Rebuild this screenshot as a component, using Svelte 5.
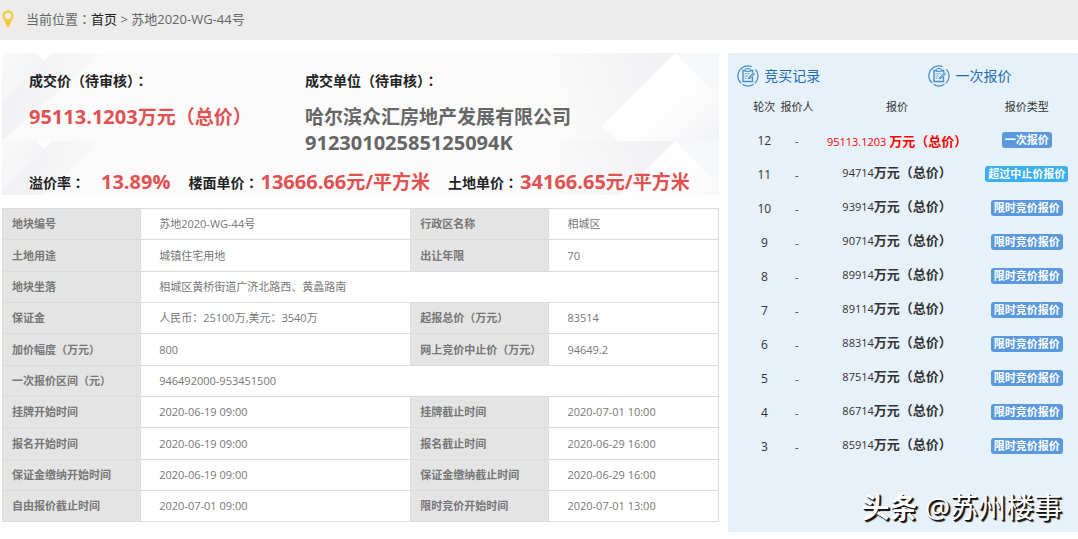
<script>
  const parcel = [
    ['地块编号', '苏地2020-WG-44号', '行政区名称', '相城区'],
    ['土地用途', '城镇住宅用地', '出让年限', '70'],
    ['地块坐落', '相城区黄桥街道广济北路西、黄蠡路南'],
    ['保证金', '人民币：25100万,美元：3540万', '起报总价（万元）', '83514'],
    ['加价幅度（万元）', '800', '网上竞价中止价（万元）', '94649.2'],
    ['一次报价区间（元）', '946492000-953451500'],
    ['挂牌开始时间', '2020-06-19 09:00', '挂牌截止时间', '2020-07-01 10:00'],
    ['报名开始时间', '2020-06-19 09:00', '报名截止时间', '2020-06-29 16:00'],
    ['保证金缴纳开始时间', '2020-06-19 09:00', '保证金缴纳截止时间', '2020-06-29 16:00'],
    ['自由报价截止时间', '2020-07-01 09:00', '限时竞价开始时间', '2020-07-01 13:00'],
  ]

  const timed = '限时竞价报价'

  const bids = [
    { round: 12, price: '95113.1203 ', type: '一次报价', final: true },
    { round: 11, price: '94714', type: '超过中止价报价', over: true },
    { round: 10, price: '93914', type: timed },
    { round: 9, price: '90714', type: timed },
    { round: 8, price: '89914', type: timed },
    { round: 7, price: '89114', type: timed },
    { round: 6, price: '88314', type: timed },
    { round: 5, price: '87514', type: timed },
    { round: 4, price: '86714', type: timed },
    { round: 3, price: '85914', type: timed },
  ]
</script>

{#snippet recordIcon()}
  <svg viewBox="0 0 22 22" width="22" height="22" fill="none" stroke="#4a8fca" aria-hidden="true">
    <path d="M14.500 1.600A10 10 0 0 0 4 18.200M5.500 19.300A10 10 0 0 0 16.500 19.300M18 18.200A10 10 0 0 0 18.500 4.400" stroke-width="1.300" />
    <path d="M15.500 12V16.500H6V5.500H15.500V7.500" stroke-width="1.400" />
    <path d="M8 6.300V4.500L9.500 3.500H12L13.500 4.500V6.300Z" fill="#cfe3f4" />
    <path d="M7.500 8.700H13M7.500 10.900H11M7.500 13.100H10.200" stroke="#7fb1dc" />
    <path d="M11.500 13.800L12 12L16.300 7.800L17.600 9.100L13.300 13.300Z" fill="#8fbce2" />
  </svg>
{/snippet}

<nav class="crumbs" aria-label="当前位置">
  <svg width="12" height="18" viewBox="0 0 12 18" aria-hidden="true">
    <path fill="#f7c93e" fill-rule="evenodd" d="M6 0.500C2.800 0.500 0.500 2.900 0.500 5.900C0.500 9 3.600 11.200 4.800 17.200H7.200C8.400 11.200 11.500 9 11.500 5.900C11.500 2.900 9.200 0.500 6 0.500ZM6 2.700A3.300 3.300 0 1 1 6 9.300A3.300 3.300 0 1 1 6 2.700Z" />
  </svg>
  <span>当前位置<span class="colon">：</span><a href="#home">首页</a> &gt; 苏地2020-WG-44号</span>
</nav>

<main class="layout">
  <div class="lot">
    <section class="deal">
      <!-- faceted paper backdrop, the tile repeats every 88px -->
      <svg class="facets" viewBox="0 0 717 142" preserveAspectRatio="none" aria-hidden="true">
        <defs>
          <linearGradient id="fold" x1="0" y1="0.3" x2="1" y2="0.6">
            <stop offset="0" stop-color="#eff0f2" />
            <stop offset="1" stop-color="#fbfbfb" />
          </linearGradient>
          <linearGradient id="corner" x1="0" y1="0" x2="1" y2="0.8">
            <stop offset="0" stop-color="#f9f9fa" />
            <stop offset="1" stop-color="#f2f3f4" />
          </linearGradient>
          <linearGradient id="shade" x1="0" y1="0.5" x2="1" y2="0.3">
            <stop offset="0" stop-color="#fbfbfb" />
            <stop offset="1" stop-color="#f0f1f3" />
          </linearGradient>
          <linearGradient id="peak" x1="0.3" y1="0.3" x2="1" y2="0.9">
            <stop offset="0" stop-color="#ffffff" />
            <stop offset="0.5" stop-color="#fdfdfd" />
            <stop offset="1" stop-color="#f3f4f6" />
          </linearGradient>
          <pattern id="tile" width="717" height="88" patternUnits="userSpaceOnUse">
            <rect width="717" height="88" fill="#fbfbfb" />
            <path d="M48 0H100L0 88V50Z" fill="url(#fold)" />
            <path d="M0 0H34L42 8L0 50Z" fill="url(#corner)" />
            <path d="M34 0H50L42 8Z" fill="#fff" />
            <path d="M545 0H673L600 73L616 88H545Z" fill="url(#shade)" />
            <path d="M673 0L717 44V88H616L600 73Z" fill="url(#peak)" />
            <path d="M673 0H717V44Z" fill="#f7f8f9" />
          </pattern>
        </defs>
        <rect width="717" height="142" fill="url(#tile)" />
      </svg>

      <div class="summary">
        <div>
          <h2>成交价（待审核）<span class="colon">：</span></h2>
          <p class="amount"><span class="num">95113.1203</span>万元（总价）</p>
        </div>
        <div>
          <h2>成交单位（待审核）<span class="colon">：</span></h2>
          <p class="buyer">哈尔滨众汇房地产发展有限公司<br /><span class="num">91230102585125094K</span></p>
        </div>
      </div>
      <dl class="rates">
        <div class="premium"><dt>溢价率<span class="colon">：</span></dt><dd><span class="num">13.89%</span></dd></div>
        <div><dt>楼面单价<span class="colon">：</span></dt><dd><span class="num">13666.66</span>元/平方米</dd></div>
        <div><dt>土地单价<span class="colon">：</span></dt><dd><span class="num">34166.65</span>元/平方米</dd></div>
      </dl>
    </section>

    <table class="parcel">
      <colgroup>
        <col class="c-label" />
        <col class="c-wide" />
        <col class="c-label" />
        <col />
      </colgroup>
      <tbody>
        {#each parcel as [label, value, label2, value2]}
          <tr>
            <th scope="row">{label}</th>
            <td colspan={label2 ? 1 : 3}>{value}</td>
            {#if label2}
              <th scope="row">{label2}</th>
              <td>{value2}</td>
            {/if}
          </tr>
        {/each}
      </tbody>
    </table>
  </div>

  <aside class="bids">
    <div class="tabs">
      <a href="#records">{@render recordIcon()}<span>竞买记录</span></a>
      <a href="#single">{@render recordIcon()}<span>一次报价</span></a>
    </div>
    <table>
      <colgroup>
        <col class="c-round" />
        <col class="c-round" />
        <col class="c-price" />
        <col />
      </colgroup>
      <thead>
        <tr>
          <th scope="col">轮次</th>
          <th scope="col">报价人</th>
          <th scope="col">报价</th>
          <th scope="col">报价类型</th>
        </tr>
      </thead>
      <tbody>
        {#each bids as bid}
          <tr>
            <td class="round">{bid.round}</td>
            <td>-</td>
            <td class="price" class:final={bid.final}>{bid.price}<b>万元（总价）</b></td>
            <td><span class="tag" class:over={bid.over}>{bid.type}</span></td>
          </tr>
        {/each}
      </tbody>
    </table>
    <p class="watermark"><b>头条</b> @苏州楼事</p>
  </aside>
</main>

<style>
  :global(body) {
    margin: 0;
    background: #fff;
    font-family: 'Open Sans', 'Noto Sans CJK SC', sans-serif;
    font-size: 11px;
    color: #333;
  }

  h2, p, dl, dd {
    margin: 0;
  }

  a {
    color: inherit;
    text-decoration: none;
  }

  table {
    width: 100%;
    table-layout: fixed;
    border-collapse: collapse;
  }

  /* the TC face centres the colon in its cell */
  .colon {
    font-family: 'Noto Sans CJK TC', sans-serif;
  }

  /* Breadcrumb */
  .crumbs {
    display: flex;
    align-items: center;
    gap: 12px;
    height: 38px;
    padding: 0 0 2px 2px;
    background: #ececec;
    color: #666;
    font-size: 13px;
    line-height: 20px;
    white-space: nowrap;
  }
  .crumbs a {
    color: #222;
  }

  .layout {
    display: grid;
    grid-template-columns: 41fr 20fr;
    gap: 9px;
    align-items: start;
    padding: 13px 0 7px 2px;
  }

  /* Deal summary */
  .deal {
    position: relative;
    margin-bottom: 13px;
    padding: 17px 0 0 27px;
    white-space: nowrap;
  }
  .facets {
    position: absolute;
    inset: 0;
    width: 100%;
    height: 100%;
    z-index: -1;
  }
  .summary {
    display: grid;
    grid-template-columns: 2fr 3fr;
  }
  h2, dt {
    font-size: 14px;
    font-weight: 700;
    line-height: 20px;
    color: #222;
  }
  .amount,
  .buyer,
  dd {
    font-size: 19px;
    font-weight: 700;
    line-height: 26px;
  }
  .amount,
  .buyer {
    margin-top: 13px;
  }
  .amount, dd {
    color: #e15151;
  }
  .buyer {
    color: #666;
  }
  .num {
    font-size: 20px;
  }
  .rates {
    display: flex;
    gap: 18px;
    margin-top: 13px;
  }
  .rates div {
    display: flex;
    align-items: center;
    gap: 2px;
  }
  .rates .premium {
    gap: 16px;
  }

  /* Parcel details */
  .parcel {
    color: #777;
    line-height: 16px;
  }
  .parcel .c-label {
    width: 19.3%;
  }
  .parcel .c-wide {
    width: 37.7%;
  }
  .parcel th,
  .parcel td {
    box-sizing: border-box;
    height: 31px;
    border: 1px solid #dcdcdc;
    padding: 0 0 0 18px;
    text-align: left;
  }
  .parcel th {
    padding-left: 9px;
    background: #e4e4e4;
    white-space: nowrap;
  }
  .parcel tr:nth-child(3n + 2) td {
    height: 32px;
  }

  /* Bid history */
  .bids {
    background: #e6f1fa;
    padding: 11px 6px 5px 20px;
  }
  .tabs {
    display: grid;
    grid-template-columns: 4fr 3fr;
    margin-left: -11px;
    color: #1d6cb5;
    font-size: 14px;
    line-height: 24px;
  }
  .tabs a {
    display: flex;
    align-items: center;
    gap: 5px;
  }
  .c-round {
    width: 10%;
  }
  .c-price {
    width: 52%;
  }
  .bids th,
  .bids td {
    padding: 0;
    text-align: center;
    white-space: nowrap;
  }
  .bids th {
    height: 35px;
    font-weight: 400;
  }
  .bids td {
    height: 34px;
  }
  .bids .round {
    font-size: 12px;
  }
  .bids .price {
    box-sizing: border-box;
    padding-bottom: 5px;
  }
  .bids .final {
    padding-bottom: 0;
    color: #f00;
  }
  .price b {
    font-size: 13px;
  }
  .tag {
    display: inline-block;
    padding: 0 3px;
    border-radius: 3px;
    background: #5a99dd;
    color: #fff;
    font-weight: 700;
    line-height: 16px;
  }
  .tag.over {
    background: #3bb0ee;
  }
  .watermark {
    margin: 24px 10px 0 0;
    color: #fff;
    font-size: 28px;
    line-height: 40px;
    text-align: right;
    text-shadow: 1px 1px 0 #111, 2px 2px 1px #111;
    white-space: nowrap;
  }
</style>
